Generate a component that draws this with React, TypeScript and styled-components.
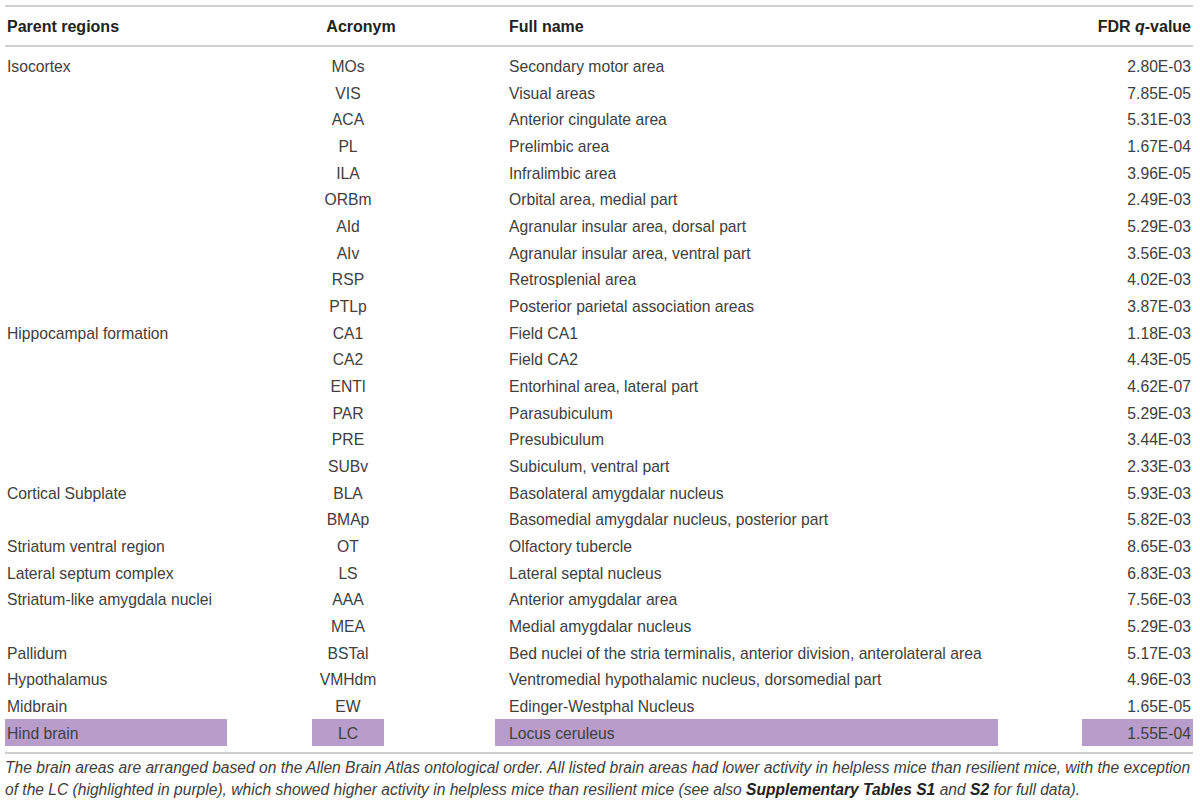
import React from "react";
import styled, { createGlobalStyle } from "styled-components";

const Global = createGlobalStyle`
  html, body { margin: 0; padding: 0; background: #ffffff; }
  body { font-family: "Liberation Sans", Arial, Helvetica, sans-serif; }
`;

const Page = styled.div`
  padding: 5px 7px 0 5px;
  width: 1188px;
`;

const Table = styled.div`
  border-top: 2px solid #cfcfcf;
  border-bottom: 2px solid #cfcfcf;
  padding-bottom: 6px;
`;

const cols = `
  grid-template-columns: 222px 85px 72px 111px 503px 84px 111px;
`;

const HeaderRow = styled.div`
  display: grid;
  ${cols}
  height: 38px;
  align-items: center;
  border-bottom: 2px solid #cfcfcf;
  margin-bottom: 5.7px;
  font-weight: bold;
  font-size: 16px;
  color: #222;
`;

const Row = styled.div`
  display: grid;
  ${cols}
  height: 26.68px;
  font-size: 15.7px;
  color: #404040;
`;

type Align = "left" | "center" | "right";

const Cell = styled.div<{ $col: number; $align: Align; $pad: string; $hl?: boolean }>`
  grid-column: ${(p) => p.$col};
  display: flex;
  align-items: center;
  justify-content: ${(p) =>
    p.$align === "left" ? "flex-start" : p.$align === "center" ? "center" : "flex-end"};
  padding: ${(p) => p.$pad};
  white-space: nowrap;
  background: ${(p) => (p.$hl ? "#b89cca" : "transparent")};
  height: 100%;
  box-sizing: border-box;
`;

const Caption = styled.div`
  padding-top: 3px;
  font-style: italic;
  font-size: 15.6px;
  line-height: 22px;
  color: #404040;
  white-space: nowrap;
`;

const Strong = styled.b`
  font-weight: bold;
  color: #222;
`;

const rows: [string, string, string, string][] = [
  ["Isocortex", "MOs", "Secondary motor area", "2.80E-03"],
  ["", "VIS", "Visual areas", "7.85E-05"],
  ["", "ACA", "Anterior cingulate area", "5.31E-03"],
  ["", "PL", "Prelimbic area", "1.67E-04"],
  ["", "ILA", "Infralimbic area", "3.96E-05"],
  ["", "ORBm", "Orbital area, medial part", "2.49E-03"],
  ["", "AId", "Agranular insular area, dorsal part", "5.29E-03"],
  ["", "AIv", "Agranular insular area, ventral part", "3.56E-03"],
  ["", "RSP", "Retrosplenial area", "4.02E-03"],
  ["", "PTLp", "Posterior parietal association areas", "3.87E-03"],
  ["Hippocampal formation", "CA1", "Field CA1", "1.18E-03"],
  ["", "CA2", "Field CA2", "4.43E-05"],
  ["", "ENTl", "Entorhinal area, lateral part", "4.62E-07"],
  ["", "PAR", "Parasubiculum", "5.29E-03"],
  ["", "PRE", "Presubiculum", "3.44E-03"],
  ["", "SUBv", "Subiculum, ventral part", "2.33E-03"],
  ["Cortical Subplate", "BLA", "Basolateral amygdalar nucleus", "5.93E-03"],
  ["", "BMAp", "Basomedial amygdalar nucleus, posterior part", "5.82E-03"],
  ["Striatum ventral region", "OT", "Olfactory tubercle", "8.65E-03"],
  ["Lateral septum complex", "LS", "Lateral septal nucleus", "6.83E-03"],
  ["Striatum-like amygdala nuclei", "AAA", "Anterior amygdalar area", "7.56E-03"],
  ["", "MEA", "Medial amygdalar nucleus", "5.29E-03"],
  ["Pallidum", "BSTal", "Bed nuclei of the stria terminalis, anterior division, anterolateral area", "5.17E-03"],
  ["Hypothalamus", "VMHdm", "Ventromedial hypothalamic nucleus, dorsomedial part", "4.96E-03"],
  ["Midbrain", "EW", "Edinger-Westphal Nucleus", "1.65E-05"],
  ["Hind brain", "LC", "Locus ceruleus", "1.55E-04"],
];

export default function App() {
  return (
    <>
      <Global />
      <Page>
        <Table>
          <HeaderRow>
            <Cell $col={1} $align="left" $pad="2px 0 0 2px">Parent regions</Cell>
            <Cell $col={3} $align="center" $pad="2px 0 0 26px">Acronym</Cell>
            <Cell $col={5} $align="left" $pad="2px 0 0 14px">Full name</Cell>
            <Cell $col={7} $align="right" $pad="2px 2px 0 0">
              FDR&nbsp;<i>q</i>-value
            </Cell>
          </HeaderRow>
          {rows.map((r, i) => {
            const hl = r[1] === "LC";
            return (
              <Row key={i}>
                <Cell $col={1} $align="left" $pad="2px 0 0 2px" $hl={hl}>{r[0]}</Cell>
                <Cell $col={3} $align="center" $pad="2px 0 0 0" $hl={hl}>{r[1]}</Cell>
                <Cell $col={5} $align="left" $pad="2px 0 0 14px" $hl={hl}>{r[2]}</Cell>
                <Cell $col={7} $align="right" $pad="2px 2px 0 0" $hl={hl}>{r[3]}</Cell>
              </Row>
            );
          })}
        </Table>
        <Caption>
          The brain areas are arranged based on the Allen Brain Atlas ontological order. All listed brain areas had lower activity in helpless mice than resilient mice, with the exception
          <br />
          of the LC (highlighted in purple), which showed higher activity in helpless mice than resilient mice (see also <Strong>Supplementary Tables S1</Strong> and <Strong>S2</Strong> for full data).
        </Caption>
      </Page>
    </>
  );
}
